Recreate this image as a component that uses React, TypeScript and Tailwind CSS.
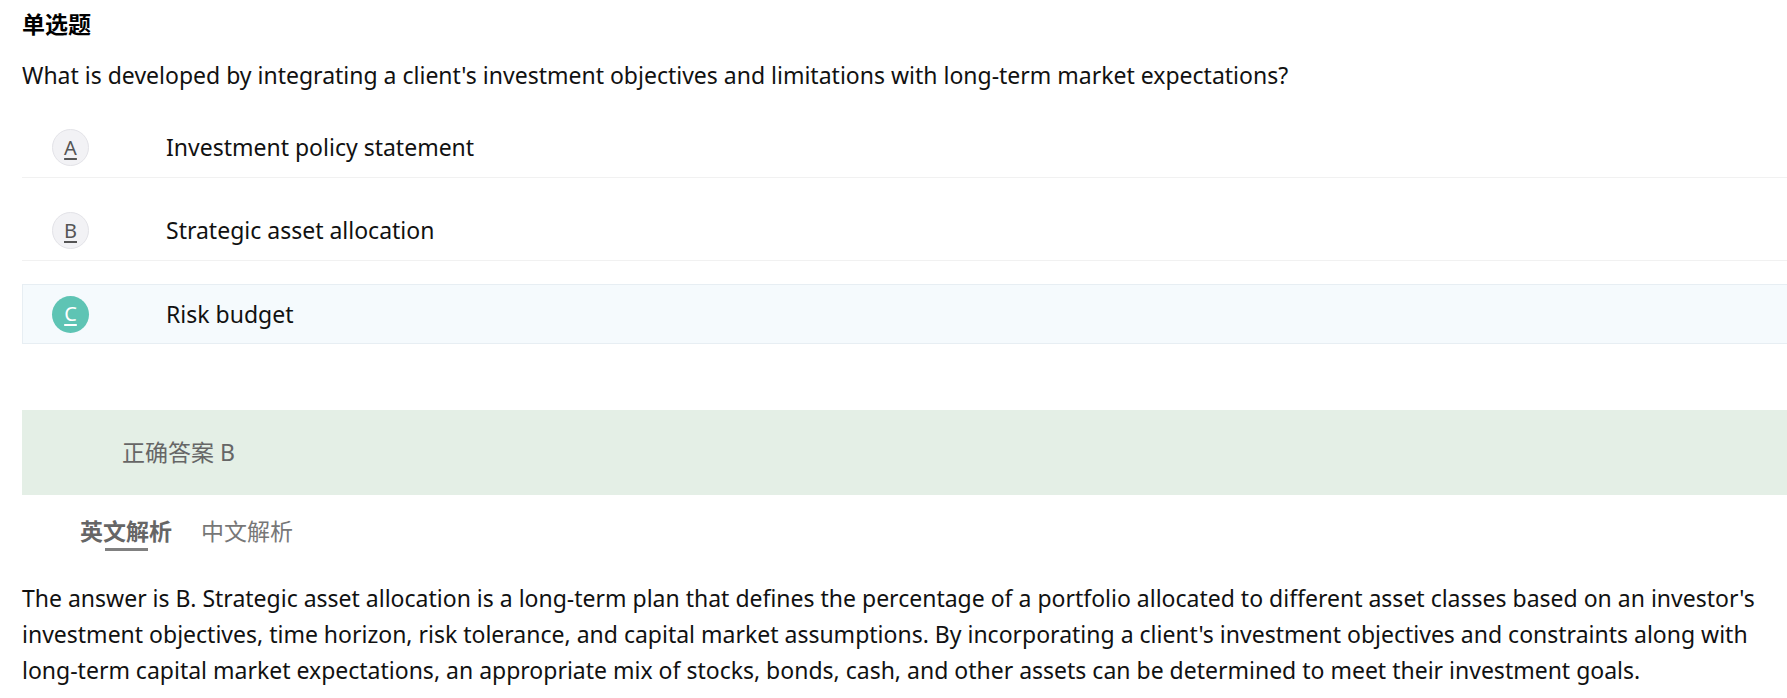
import React from "react";

const FONT = {
  fontFamily:
    '"Noto Sans", "Noto Sans CJK SC", sans-serif',
};

type Opt = { key: string; text: string; selected?: boolean };

const options: Opt[] = [
  { key: "A", text: "Investment policy statement" },
  { key: "B", text: "Strategic asset allocation" },
  { key: "C", text: "Risk budget", selected: true },
];

function OptionRow({ o }: { o: Opt }) {
  return (
    <div
      className={
        "flex items-center h-[60px] " +
        (o.selected
          ? "bg-[#f5fafd] border border-r-0 border-[#e7eef3]"
          : "border-b border-[#f1f1f1]")
      }
    >
      <div
        className={
          "flex " + (o.selected ? "w-[143px] pl-[29px]" : "w-[144px] pl-[30px]")
        }
      >
        <div
          className={
            "w-[37px] h-[37px] rounded-full flex items-center justify-center text-[20px] underline underline-offset-[3px] " +
            (o.selected
              ? "bg-[#5ec4b4] text-white"
              : "bg-[#f2f2f5] border border-[#e3e3e8] text-[#555]")
          }
        >
          {o.key}
        </div>
      </div>
      <div className="text-[23px] text-[#111]">{o.text}</div>
    </div>
  );
}

export default function App() {
  return (
    <div
      className="bg-white min-h-[698px] w-full pl-[22px] pt-[8px] text-[#111]"
      style={FONT}
    >
      <div className="text-[23px] font-bold leading-[32px] text-black">单选题</div>
      <div className="mt-[17px] text-[23px] leading-[36px]">
        What is developed by integrating a client's investment objectives and limitations with long-term market expectations?
      </div>
      <div className="mt-[25px] flex flex-col gap-[23px]">
        {options.map((o) => (
          <OptionRow key={o.key} o={o} />
        ))}
      </div>
      <div className="mt-[66px] h-[85px] bg-[#e4efe6] flex items-center pl-[100px] text-[23px] text-[#666]">
        正确答案 B
      </div>
      <div className="mt-[21px] flex pl-[58px] gap-[29px] text-[23px] leading-[30px]">
        <div className="flex flex-col items-center">
          <span className="font-bold text-[#666]">英文解析</span>
          <span className="mt-[2px] w-[43px] h-[3px] bg-[#808080]" />
        </div>
        <span className="text-[#777]">中文解析</span>
      </div>
      <p className="mt-[29px] pr-[8px] text-[23px] leading-[36px] text-[#111]">
        The answer is B. Strategic asset allocation is a long-term plan that defines the percentage of a portfolio allocated to different asset classes based on an investor's investment objectives, time horizon, risk tolerance, and capital market assumptions. By incorporating a client's investment objectives and constraints along with long-term capital market expectations, an appropriate mix of stocks, bonds, cash, and other assets can be determined to meet their investment goals.
      </p>
    </div>
  );
}
